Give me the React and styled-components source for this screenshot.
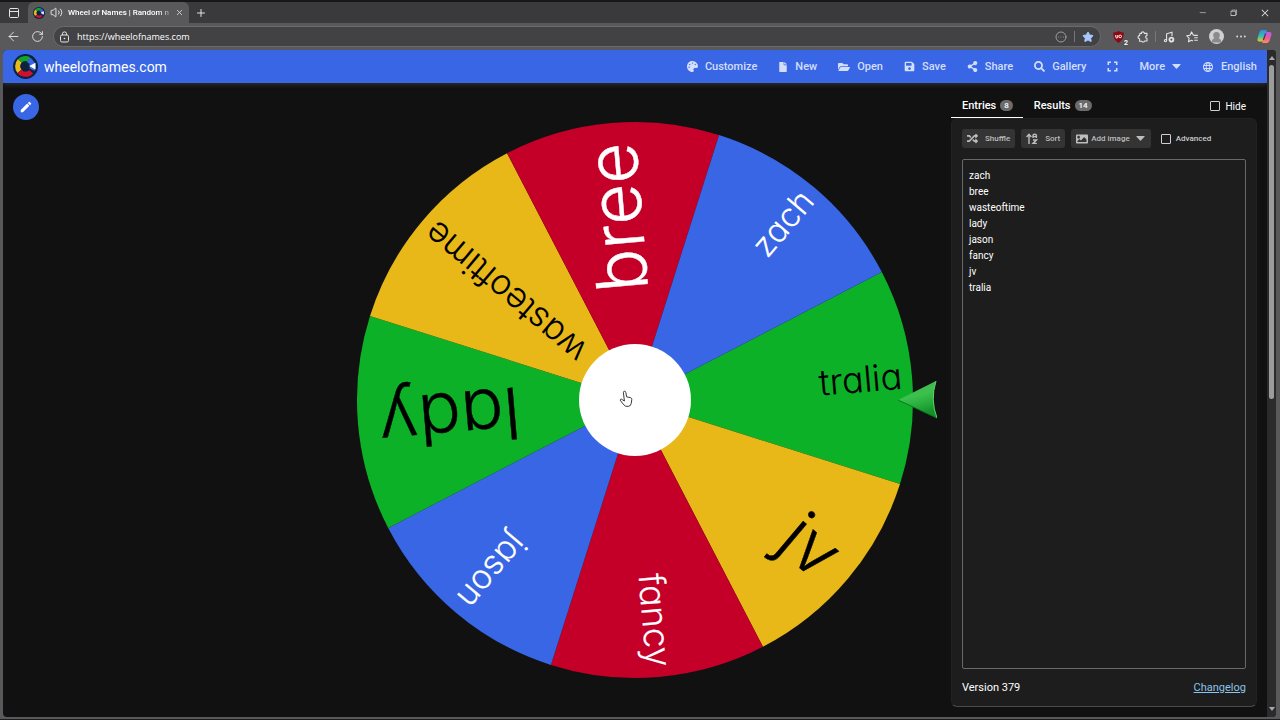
import React, { useState } from "react"
import styled, { createGlobalStyle } from "styled-components"
import {
  FaPalette, FaFile, FaFolderOpen, FaSave, FaShareAlt, FaSearch,
  FaRandom, FaImage,
} from "react-icons/fa"
import { MdLanguage, MdEdit } from "react-icons/md"
import {
  VscChromeMinimize, VscChromeRestore, VscChromeClose,
} from "react-icons/vsc"
import {
  ArrowLeft, RotateCw, Volume2, PanelTop, Plus, X,
  Star, CircleEllipsis, UserRound,
} from "lucide-react"

const GlobalStyle = createGlobalStyle`
  * {
    box-sizing: border-box;
  }

  body {
    margin: 0;
    background: #0a0a0a;
    font-family: Roboto, "Liberation Sans", sans-serif;
    color: #fff;
  }

  button, input, textarea {
    font: inherit;
    color: inherit;
  }
`

const Window = styled.div`
  display: flex;
  flex-direction: column;
  height: 100vh;
  min-height: 480px;
  background: #59595b;
  border-top: 2px solid #171719;
  border-bottom: 1px solid #1c1c1c;
  overflow: hidden;
`

/* ---- browser chrome ---- */

const PlainButton = styled.button`
  display: flex;
  align-items: center;
  justify-content: center;
  flex: none;
  padding: 0;
  border: 0;
  background: none;
  color: #e4e4e4;
`

const TabStrip = styled.div`
  display: flex;
  align-items: center;
  height: 21px;
  flex: none;
  background: #3a3a3c;
`

const TabMenuButton = styled(PlainButton)`
  width: 28px;
`

const BrowserTab = styled.div`
  display: flex;
  align-items: center;
  gap: 5px;
  width: 161px;
  height: 21px;
  padding: 0 5px;
  background: #59595b;
  border-radius: 6px 6px 0 0;

  svg {
    flex: none;
  }
`

const BrowserTabTitle = styled.span`
  flex: 1;
  white-space: nowrap;
  font-size: 8px;
  font-weight: 500;
  mask-image: linear-gradient(90deg, #000 88%, #0004);
`

const NewTabButton = styled(PlainButton)`
  width: 24px;
`

const WindowButtons = styled.div`
  display: flex;
  margin-left: auto;
`

const WindowButton = styled(PlainButton)`
  width: 31px;
  height: 21px;
`

const NavBar = styled.div`
  display: flex;
  align-items: center;
  flex: none;
  height: 27px;
  padding-left: 1px;
`

const NavButton = styled(PlainButton)`
  width: 24px;
`

const AddressBar = styled.div`
  display: flex;
  align-items: center;
  flex: 1;
  height: 21px;
  margin: 0 6px 0 4px;
  padding: 0 6px 0 5px;
  gap: 7px;
  background: #424244;
  border: 1px solid #6a6a6c;
  border-radius: 11px;
`

const AddressInput = styled.input`
  flex: 1;
  min-width: 0;
  padding: 0;
  border: 0;
  outline: 0;
  background: none;
  font-family: "Open Sans", "Noto Sans", sans-serif;
  font-size: 9px;
  font-weight: 500;
`

const BarDivider = styled.span`
  width: 1px;
  height: 11px;
  background: #77777a;
`

const Extensions = styled.div`
  display: flex;
  align-items: center;
  gap: 1px;
  padding-right: 4px;
`

const ExtensionButton = styled(PlainButton)`
  position: relative;
  width: 23px;
`

const ExtensionCount = styled.span`
  position: absolute;
  right: 1px;
  bottom: -4px;
  padding: 0 1px;
  background: #555;
  border-radius: 2px;
  color: #fff;
  font-size: 7px;
  font-weight: 700;
  line-height: 8px;
`

const Avatar = styled.span`
  display: flex;
  justify-content: center;
  align-items: flex-end;
  width: 15px;
  height: 15px;
  border-radius: 50%;
  background: #cfcfcf;
  color: #8a8a8a;
  overflow: hidden;
`

/* ---- page ---- */

const Viewport = styled.div`
  display: flex;
  flex: 1;
  min-height: 0;
  margin: 0 4px 2px 3px;
  border-radius: 4px;
  background: #111;
  overflow: hidden;
`

const Page = styled.div`
  display: flex;
  flex-direction: column;
  flex: 1;
  min-width: 0;
`

const Header = styled.header`
  display: flex;
  align-items: center;
  justify-content: space-between;
  flex: none;
  height: 33px;
  padding: 0 10px;
  background: #3866e4;
  box-shadow: 0 1px 5px #55555588;
`

const Brand = styled.a`
  display: flex;
  align-items: center;
  gap: 6px;
  color: #fff;
  font-size: 14px;
  text-decoration: none;
`

const Menu = styled.nav`
  display: flex;
  align-items: center;
  gap: 21px;
`

const MenuButton = styled.button`
  display: flex;
  align-items: center;
  gap: 7px;
  padding: 0;
  border: 0;
  background: none;
  color: #d3defa;
  font-size: 11px;
  font-weight: 500;
  line-height: 16px;
`

const Main = styled.main`
  display: grid;
  grid-template-columns: minmax(320px, 1fr) minmax(0, 604px) minmax(320px, 1fr);
  flex: 1;
  min-height: 0;
`

const EditButton = styled.button`
  display: flex;
  align-items: center;
  justify-content: center;
  width: 26px;
  height: 26px;
  margin: 11px 10px;
  padding: 0;
  border: 0;
  border-radius: 50%;
  background: #3866e4;
`

const WheelBox = styled.div`
  display: flex;
  align-items: center;
  justify-content: center;
  min-height: 0;

  svg {
    width: 100%;
    max-height: 100%;
  }
`

const WheelLabel = styled.text`
  font-family: Inter, Lato, sans-serif;
  font-weight: 300;
  font-feature-settings: "cv11";
  text-anchor: end;
  stroke-linejoin: round;
`

const Side = styled.aside`
  display: flex;
  flex-direction: column;
  justify-self: end;
  width: 306px;
  min-height: 0;
  margin-right: 10px;
  padding: 11px 0 10px;
`

const Tabs = styled.div`
  display: flex;
  align-items: center;
  flex: none;
  height: 24px;
`

const TabButton = styled.button`
  display: flex;
  align-items: center;
  gap: 4px;
  height: 24px;
  padding: 0 10px 0 11px;
  border: 0;
  border-bottom: 1px solid ${(props) => (props.$active ? "#fff" : "transparent")};
  background: none;
  font-size: 11px;
  font-weight: 500;
`

const Count = styled.span`
  padding: 0 4px;
  border-radius: 6px;
  background: #6b6b6b;
  font-size: 8px;
  line-height: 11px;
`

const CheckLabel = styled.label`
  display: flex;
  align-items: center;
  gap: 5px;
  font-size: ${(props) => (props.$small ? "8px" : "10px")};
  font-weight: ${(props) => (props.$small ? "500" : "400")};
  color: ${(props) => (props.$small ? "#ccc" : "#fff")};

  input {
    appearance: none;
    width: 10px;
    height: 10px;
    margin: 0;
    border: 1px solid #d0d0d0;
    border-radius: 1px;
  }

  input:checked {
    background: #3866e4;
  }
`

const HideSlot = styled.div`
  margin: 0 11px 0 auto;
`

const Card = styled.section`
  display: flex;
  flex-direction: column;
  flex: 1;
  min-height: 0;
  padding: 10px;
  background: #1d1d1d;
  border: 1px solid #222;
  border-bottom-color: #4a4a4a;
  border-radius: 6px;
`

const Tools = styled.div`
  display: flex;
  align-items: center;
  gap: 6px;
  flex: none;
`

const ToolButton = styled.button`
  display: flex;
  align-items: center;
  gap: ${(props) => (props.$tight ? "3px" : "7px")};
  height: 19px;
  padding: 0 5px;
  border: 0;
  border-radius: 3px;
  background: #343434;
  color: #bdbdbd;
  font-size: 8px;
  font-weight: 500;
`

const CaretSlot = styled.span`
  display: flex;
  padding: 0 1px 0 3px;
`

const AdvancedSlot = styled.div`
  margin-left: 4px;
`

const Entries = styled.textarea`
  flex: 1;
  min-height: 0;
  margin-top: 11px;
  padding: 8px 6px;
  resize: none;
  outline: 0;
  border: 1px solid #686868;
  border-radius: 2px;
  background: #1d1d1d;
  font-size: 10px;
  line-height: 16px;
`

const CardFooter = styled.footer`
  display: flex;
  justify-content: space-between;
  flex: none;
  padding: 11px 0 0;
  font-size: 11px;
  line-height: 16px;

  a {
    color: #8ac4ea;
  }
`

const ScrollBar = styled.div`
  display: flex;
  flex-direction: column;
  align-items: center;
  flex: none;
  width: 9px;
  padding: 6px 0;
  gap: 5px;
  background: #2b2b2b;
`

const ScrollThumb = styled.div`
  width: 5px;
  height: 51%;
  border-radius: 3px;
  background: #9c9c9c;
`

const ScrollArrow = styled.span`
  border: 3px solid transparent;
  border-top-width: ${(props) => (props.$up ? "0" : "4px")};
  border-bottom-width: ${(props) => (props.$up ? "4px" : "0")};
  border-${(props) => (props.$up ? "bottom" : "top")}-color: #a8a8a8;
  margin-top: ${(props) => (props.$up ? "0" : "auto")};
`

const RED = "#c40028"
const BLUE = "#3866e4"
const GREEN = "#0cb128"
const YELLOW = "#e8b818"

// clockwise, starting at the winner's slice
const slices = [
  { name: "tralia", color: GREEN, size: 36, end: 268 },
  { name: "jv", color: YELLOW, size: 70, end: 256 },
  { name: "fancy", color: RED, size: 36, end: 268 },
  { name: "jason", color: BLUE, size: 34, end: 266 },
  { name: "lady", color: GREEN, size: 71, end: 257 },
  { name: "wasteoftime", color: YELLOW, size: 35, end: 268 },
  { name: "bree", color: RED, size: 71, end: 258 },
  { name: "zach", color: BLUE, size: 33, end: 268 },
]

const START = -4.9
const R = 278

const point = (deg) => {
  const a = (deg * Math.PI) / 180
  return `${R * Math.cos(a)} ${R * Math.sin(a)}`
}

const Logo = ({ size }) => (
  <svg width={size} height={size} viewBox="0 0 26 26" aria-hidden="true">
    <circle cx="13" cy="13" r="13" fill="#0b2341" />
    <path d="M13 13 L17 3.4 A10.4 10.4 0 0 1 22.4 17.6 Z" fill="#3866e4" />
    <g fill="none" strokeWidth="5.4">
      <path d="M7 7.4 A8 8 0 0 1 16.4 5.6" stroke="#12a52b" />
      <path d="M6.8 18 A8 8 0 0 1 7 7.4" stroke="#eab91b" />
      <path d="M19 18.4 A8 8 0 0 1 6.8 18" stroke="#d0102d" />
    </g>
    <circle cx="13" cy="13" r="4.6" fill="#0b2341" />
    <path d="M16.8 12.6 L23.4 9 V16 Z" fill="#fff" />
  </svg>
)

const Caret = () => (
  <svg width="9" height="5" viewBox="0 0 9 5" aria-hidden="true">
    <path d="M0.8 0 H8.2 Q9 0 8.5 0.7 L5 4.5 Q4.5 5 4 4.5 L0.5 0.7 Q0 0 0.8 0 Z" fill="currentColor" />
  </svg>
)

const SortIcon = () => (
  <svg width="12" height="12" viewBox="0 0 12 12" fill="none" stroke="currentColor" strokeWidth="1.4" aria-hidden="true">
    <path d="M3 11 V2 M0.6 4 L3 1.4 L5.4 4" />
    <path d="M7 5 V2.6 Q7 1.2 8.7 1.2 Q10.4 1.2 10.4 2.6 V5 M7 3.6 H10.4 M7 7 H10.4 L7 10.4 H10.8" />
  </svg>
)

const LockIcon = () => (
  <svg width="11" height="12" viewBox="0 0 11 12" fill="none" stroke="#e4e4e4" aria-hidden="true">
    <rect x="1.5" y="4" width="8" height="7" rx="1.4" />
    <path d="M3.4 4 V2.8 Q3.4 0.9 5.5 0.9 Q7.6 0.9 7.6 2.8 V4" />
    <circle cx="5.5" cy="7.5" r="0.8" fill="#e4e4e4" stroke="none" />
  </svg>
)

const PuzzleIcon = () => (
  <svg width="12" height="12" viewBox="0 0 12 12" fill="none" stroke="currentColor" strokeWidth="1.1" strokeLinejoin="round" aria-hidden="true">
    <path d="M3 2.4 H4.4 A1.5 1.5 0 0 1 7.4 2.4 H10 V4.6 A1.4 1.4 0 0 0 10 7.4 V10 H7.6 A1.5 1.5 0 0 1 4.8 10.2 H2.6 V7.8 A1.6 1.6 0 0 1 2.6 4.6 Z" />
  </svg>
)

const MediaIcon = () => (
  <svg width="12" height="12" viewBox="0 0 12 12" fill="none" stroke="currentColor" strokeWidth="1.1" aria-hidden="true">
    <path d="M3.6 9.6 V2.8 L9 1.2 V5" />
    <circle cx="2.5" cy="9.6" r="1.1" />
    <circle cx="8.4" cy="8.6" r="2" strokeWidth="1.8" />
  </svg>
)

const FavoritesIcon = () => (
  <svg width="13" height="12" viewBox="0 0 13 12" fill="none" stroke="currentColor" strokeWidth="1.1" strokeLinejoin="round" aria-hidden="true">
    <path d="M7.4 4.2 L5.6 0.9 L4 4.2 L0.7 4.7 L3.1 7.1 L2.5 10.8 L5.6 9.2 L7 9.9" />
    <path d="M7.4 4.4 H11.8 M8.2 6.8 H11.8 M8.2 9.2 H11.8" />
  </svg>
)

const DotsIcon = () => (
  <svg width="10" height="3" viewBox="0 0 10 3" fill="currentColor" aria-hidden="true">
    <circle cx="1.2" cy="1.5" r="0.9" />
    <circle cx="5" cy="1.5" r="0.9" />
    <circle cx="8.8" cy="1.5" r="0.9" />
  </svg>
)

const CopilotIcon = () => (
  <svg width="15" height="15" viewBox="0 0 15 15" aria-hidden="true">
    <defs>
      <linearGradient id="cpA" x1="0" y1="0" x2="0" y2="1">
        <stop offset="0" stopColor="#2f8cf0" />
        <stop offset="0.55" stopColor="#35c3a0" />
        <stop offset="1" stopColor="#f4c430" />
      </linearGradient>
      <linearGradient id="cpB" x1="0" y1="0" x2="0" y2="1">
        <stop offset="0" stopColor="#b35cf0" />
        <stop offset="0.6" stopColor="#f05a9a" />
        <stop offset="1" stopColor="#ff9448" />
      </linearGradient>
    </defs>
    <path d="M5 1 H9 Q10 1 9.6 2.5 L7 11 Q6.4 12.5 5 12.5 H2.4 Q0 12.5 0.6 9.6 L2.2 4 Q3 1 5 1 Z" fill="url(#cpA)" />
    <path d="M10 3 H12.4 Q15 3 14.4 6 L12.8 11 Q12 14 10 14 H6 Q5 14 5.4 12.5 L8 4.5 Q8.4 3 10 3 Z" fill="url(#cpB)" />
    <path d="M8.6 4.4 L6.4 11" stroke="#3a3a44" strokeWidth="1.2" />
  </svg>
)

const FullscreenIcon = () => (
  <svg width="11" height="11" viewBox="0 0 12 12" fill="none" stroke="currentColor" strokeWidth="1.7" aria-hidden="true">
    <path d="M1.4 4.3 V1.4 H4.3 M7.7 1.4 H10.6 V4.3 M10.6 7.7 V10.6 H7.7 M4.3 10.6 H1.4 V7.7" />
  </svg>
)

const Wheel = () => (
  <svg viewBox="-302 -302 604 604" role="img" aria-label="Wheel of names">
    <defs>
      <linearGradient id="pointer" x1="0" y1="0" x2="0.3" y2="1">
        <stop offset="0" stopColor="#45b552" />
        <stop offset="0.5" stopColor="#3cc04c" />
        <stop offset="0.8" stopColor="#23a838" />
        <stop offset="1" stopColor="#12902a" />
      </linearGradient>
    </defs>
    {slices.map((slice, i) => {
      const mid = START + i * 45
      return (
        <path
          key={slice.name}
          d={`M0 0 L${point(mid - 22.5)} A${R} ${R} 0 0 1 ${point(mid + 22.5)} Z`}
          fill={slice.color}
        />
      )
    })}
    {slices.map((slice, i) => {
      const ink = slice.color === RED || slice.color === BLUE ? "#fff" : "#000"
      return (
        <WheelLabel
          key={slice.name}
          transform={`rotate(${START + i * 45})`}
          x={slice.end}
          y={slice.size * 0.32}
          fontSize={slice.size}
          fill={ink}
          stroke={ink}
          strokeWidth={slice.size > 50 ? 0.4 : 0.1}
        >
          {slice.name}
        </WheelLabel>
      )
    })}
    <circle r="56" fill="#fff" />
    <path d="M263 0 L301 -19 Q295 0 302 18 Z" fill="url(#pointer)" />
    <path d="M263 0 L302 18" stroke="#0c7a20" />
    <path d="M301 -19 Q295 0 302 18" fill="none" stroke="#5ad86a" />
    {/* hand cursor over the hub */}
    <path
      d="M-11.6 -7.4 q0 -1.4 1.2 -1.4 q1 0 1.2 1.2 l0.8 4.4 l4 0.9 q1.4 0.4 1.2 2 l-0.6 3.8 q-0.4 2.6 -3 2.9 q-3 0.4 -4.4 -1.6 l-3.2 -4 q-0.8 -1 0 -1.5 q0.8 -0.5 1.8 0.4 l2 1.3 z"
      fill="#fff"
      stroke="#222"
      strokeWidth="0.9"
    />
  </svg>
)

const menuItems = [
  { label: "Customize", icon: <FaPalette size={11} /> },
  { label: "New", icon: <FaFile size={10} /> },
  { label: "Open", icon: <FaFolderOpen size={12} /> },
  { label: "Save", icon: <FaSave size={11} /> },
  { label: "Share", icon: <FaShareAlt size={11} /> },
  { label: "Gallery", icon: <FaSearch size={11} /> },
]

const Chrome = () => {
  const [url, setUrl] = useState("https://wheelofnames.com")

  return (
    <>
      <TabStrip>
        <TabMenuButton aria-label="Tab actions"><PanelTop size={12} /></TabMenuButton>
        <BrowserTab>
          <Logo size={12} />
          <Volume2 size={13} strokeWidth={1.5} />
          <BrowserTabTitle>Wheel of Names | Random n</BrowserTabTitle>
          <PlainButton aria-label="Close tab"><X size={9} /></PlainButton>
        </BrowserTab>
        <NewTabButton aria-label="New tab"><Plus size={12} /></NewTabButton>
        <WindowButtons>
          <WindowButton aria-label="Minimize"><VscChromeMinimize size={9} /></WindowButton>
          <WindowButton aria-label="Restore"><VscChromeRestore size={9} /></WindowButton>
          <WindowButton aria-label="Close"><VscChromeClose size={10} /></WindowButton>
        </WindowButtons>
      </TabStrip>
      <NavBar>
        <NavButton aria-label="Back"><ArrowLeft size={15} strokeWidth={1.5} /></NavButton>
        <NavButton aria-label="Reload"><RotateCw size={13} strokeWidth={1.7} /></NavButton>
        <AddressBar>
          <LockIcon />
          <AddressInput aria-label="Address" value={url} onChange={(e) => setUrl(e.target.value)} />
          <CircleEllipsis size={12} strokeWidth={1.6} color="#b0b0b0" />
          <BarDivider />
          <Star size={12} fill="#a9c7ff" color="#a9c7ff" />
        </AddressBar>
        <Extensions>
          <ExtensionButton aria-label="Ad blocker">
            <svg width="11" height="12" viewBox="0 0 11 12">
              <path d="M5.5 0 Q8 1.6 10.8 1.6 Q11 9 5.5 12 Q0 9 0.2 1.6 Q3 1.6 5.5 0 Z" fill="#8c0812" />
              <path d="M2.8 4 V6 Q2.8 7 3.8 7 Q4.8 7 4.8 6 V4" fill="none" stroke="#fff" />
              <circle cx="7.2" cy="5.4" r="1.3" fill="none" stroke="#fff" />
            </svg>
            <ExtensionCount>2</ExtensionCount>
          </ExtensionButton>
          <ExtensionButton aria-label="Extensions"><PuzzleIcon /></ExtensionButton>
          <BarDivider />
          <ExtensionButton aria-label="Media"><MediaIcon /></ExtensionButton>
          <ExtensionButton aria-label="Favorites"><FavoritesIcon /></ExtensionButton>
          <ExtensionButton aria-label="Profile">
            <Avatar><UserRound size={13} fill="currentColor" /></Avatar>
          </ExtensionButton>
          <ExtensionButton aria-label="Settings"><DotsIcon /></ExtensionButton>
          <ExtensionButton aria-label="Copilot"><CopilotIcon /></ExtensionButton>
        </Extensions>
      </NavBar>
    </>
  )
}

const EntriesPanel = () => {
  const [tab, setTab] = useState("entries")
  const [text, setText] = useState("zach\nbree\nwasteoftime\nlady\njason\nfancy\njv\ntralia")

  return (
    <Side>
      <Tabs>
        <TabButton $active={tab === "entries"} onClick={() => setTab("entries")}>
          Entries <Count>8</Count>
        </TabButton>
        <TabButton $active={tab === "results"} onClick={() => setTab("results")}>
          Results <Count>14</Count>
        </TabButton>
        <HideSlot>
          <CheckLabel><input type="checkbox" />Hide</CheckLabel>
        </HideSlot>
      </Tabs>
      <Card>
        <Tools>
          <ToolButton><FaRandom size={11} />Shuffle</ToolButton>
          <ToolButton><SortIcon />Sort</ToolButton>
          <ToolButton $tight>
            <FaImage size={12} />
            Add image
            <CaretSlot><Caret /></CaretSlot>
          </ToolButton>
          <AdvancedSlot>
            <CheckLabel $small><input type="checkbox" />Advanced</CheckLabel>
          </AdvancedSlot>
        </Tools>
        <Entries
          aria-label="Entries"
          spellCheck={false}
          value={text}
          onChange={(e) => setText(e.target.value)}
        />
        <CardFooter>
          <span>Version 379</span>
          <a href="#changelog">Changelog</a>
        </CardFooter>
      </Card>
    </Side>
  )
}

const App = () => (
  <>
    <GlobalStyle />
    <Window>
      <Chrome />
      <Viewport>
        <Page>
          <Header>
            <Brand href="#home">
              <Logo size={25} />
              wheelofnames.com
            </Brand>
            <Menu>
              {menuItems.map((item) => (
                <MenuButton key={item.label}>
                  {item.icon}
                  {item.label}
                </MenuButton>
              ))}
              <MenuButton aria-label="Fullscreen"><FullscreenIcon /></MenuButton>
              <MenuButton>More<Caret /></MenuButton>
              <MenuButton><MdLanguage size={12} />English</MenuButton>
            </Menu>
          </Header>
          <Main>
            <div>
              <EditButton aria-label="Edit title"><MdEdit size={14} /></EditButton>
            </div>
            <WheelBox><Wheel /></WheelBox>
            <EntriesPanel />
          </Main>
        </Page>
        <ScrollBar>
          <ScrollArrow $up />
          <ScrollThumb />
          <ScrollArrow />
        </ScrollBar>
      </Viewport>
    </Window>
  </>
)

export default App
